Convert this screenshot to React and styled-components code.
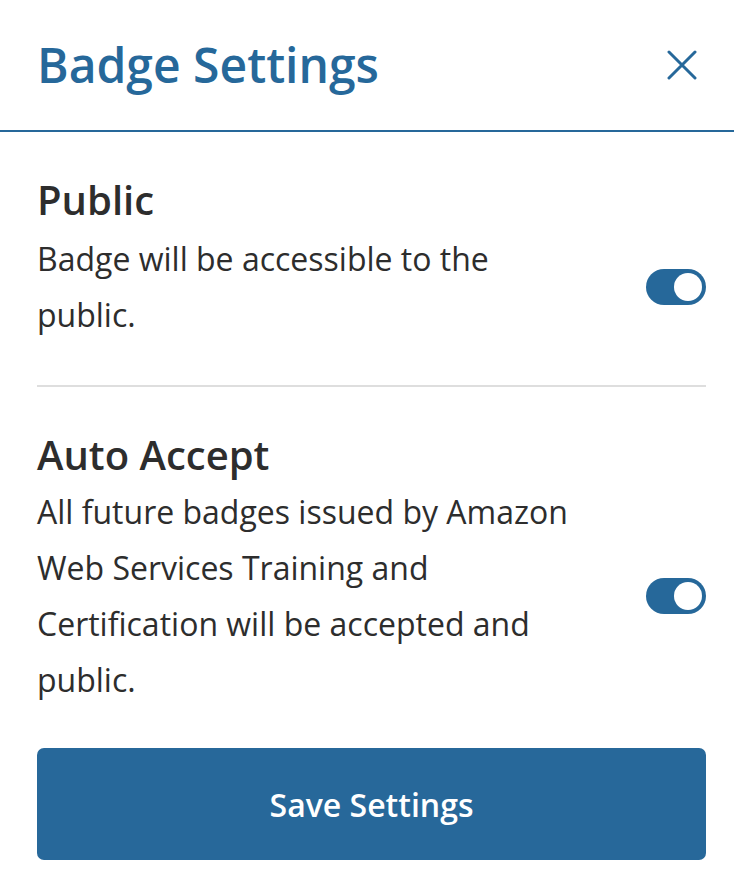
import React, { useState } from "react";
import styled, { createGlobalStyle } from "styled-components";

const Global = createGlobalStyle`
  html, body { margin: 0; padding: 0; background: #fff; }
  body { font-family: "Open Sans", "Liberation Sans", sans-serif; color: #2d2d2d; }
  * { box-sizing: border-box; }
`;

const Panel = styled.div`
  width: 734px;
  height: 890px;
  background: #fff;
  display: flex;
  flex-direction: column;
`;

const Header = styled.header`
  height: 132px;
  display: flex;
  align-items: center;
  justify-content: space-between;
  padding: 0 37px 1px 37px;
  border-bottom: 2px solid #26689a;
`;

const Title = styled.h1`
  margin: 0;
  font-size: 48px;
  font-weight: 600;
  color: #26689a;
  line-height: 48px;
`;

const CloseButton = styled.button`
  border: 0;
  background: none;
  padding: 0;
  width: 30px;
  height: 30px;
  display: flex;
  align-items: center;
  justify-content: center;
  cursor: pointer;
`;

const Body = styled.div`
  padding: 0 28px 0 37px;
  display: flex;
  flex-direction: column;
`;

const Section = styled.section`
  padding: 44px 0 ${(p) => p.$bottom}px;
  border-bottom: ${(p) => (p.$divider ? "2px solid #dedede" : "none")};
`;

const Heading = styled.h2`
  margin: 0 0 ${(p) => p.$gap}px;
  font-size: 40px;
  font-weight: 600;
  color: #2d2d2d;
  line-height: 48px;
`;

const Row = styled.div`
  display: flex;
  align-items: center;
  justify-content: space-between;
`;

const Desc = styled.p`
  margin: 0;
  width: 550px;
  font-size: 32px;
  line-height: 56px;
  color: #2d2d2d;
`;

const Toggle = styled.button`
  flex: none;
  width: 60px;
  height: 36px;
  border-radius: 18px;
  border: 0;
  padding: 4px;
  background: ${(p) => (p.$on ? "#26689a" : "#bbb")};
  display: flex;
  justify-content: ${(p) => (p.$on ? "flex-end" : "flex-start")};
  cursor: pointer;
`;

const Knob = styled.span`
  width: 28px;
  height: 28px;
  border-radius: 50%;
  background: #fff;
`;

const SaveButton = styled.button`
  height: 112px;
  border: 0;
  border-radius: 7px;
  background: #27689a;
  color: #fff;
  font-family: "Open Sans", "Liberation Sans", sans-serif;
  font-size: 32px;
  font-weight: 600;
  cursor: pointer;
`;

function Setting({ title, text, on, onToggle, divider, bottom, gap }) {
  return (
    <Section $divider={divider} $bottom={bottom}>
      <Heading $gap={gap}>{title}</Heading>
      <Row>
        <Desc>{text}</Desc>
        <Toggle $on={on} onClick={onToggle} aria-label={title}>
          <Knob />
        </Toggle>
      </Row>
    </Section>
  );
}

export default function App() {
  const [pub, setPub] = useState(true);
  const [auto, setAuto] = useState(true);
  return (
    <Panel>
      <Global />
      <Header>
        <Title>Badge Settings</Title>
        <CloseButton aria-label="Close">
          <svg width="30" height="30" viewBox="0 0 30 30" fill="none">
            <path d="M2 2 L28 28 M28 2 L2 28" stroke="#26689a" strokeWidth="3" strokeLinecap="round" />
          </svg>
        </CloseButton>
      </Header>
      <Body>
        <Setting
          title="Public"
          text="Badge will be accessible to the public."
          on={pub}
          onToggle={() => setPub(!pub)}
          divider
          bottom={42}
          gap={7}
        />
        <Setting
          title="Auto Accept"
          text="All future badges issued by Amazon Web Services Training and Certification will be accepted and public."
          on={auto}
          onToggle={() => setAuto(!auto)}
          bottom={40}
          gap={5}
        />
        <SaveButton>Save Settings</SaveButton>
      </Body>
    </Panel>
  );
}
